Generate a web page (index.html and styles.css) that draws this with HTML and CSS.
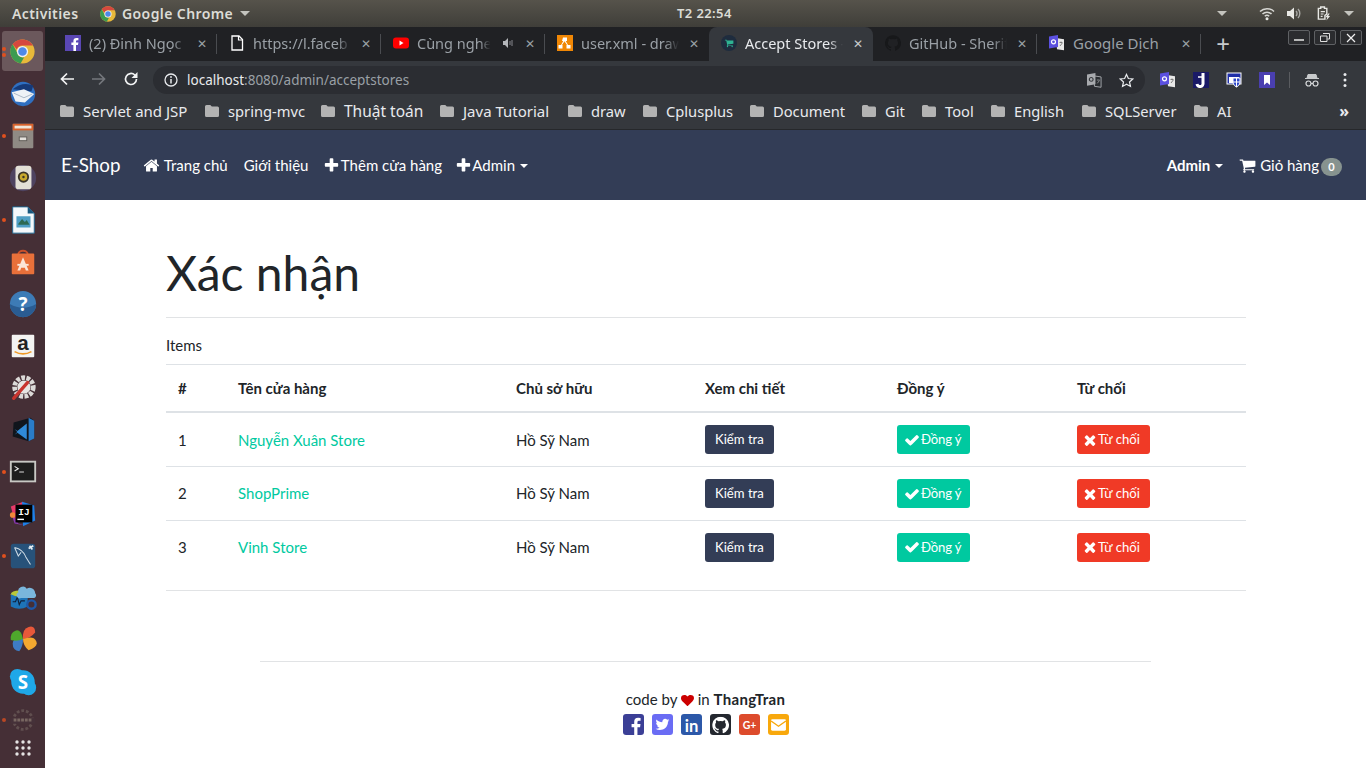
FILE: index.html
```html
<!DOCTYPE html>
<html lang="vi">
<head>
<meta charset="utf-8">
<title>Accept Stores</title>
<link rel="stylesheet" href="styles.css">
</head>
<body>
<svg class="sprite" xmlns="http://www.w3.org/2000/svg">
  <symbol id="i-check" viewBox="0 0 1792 1792"><path d="M1671 566q0 40-28 68l-724 724-136 136q-28 28-68 28t-68-28l-136-136-362-362q-28-28-28-68t28-68l136-136q28-28 68-28t68 28l294 295 656-657q28-28 68-28t68 28l136 136q28 28 28 68z"/></symbol>
  <symbol id="i-times" viewBox="0 0 1792 1792"><path d="M1490 1322q0 40-28 68l-136 136q-28 28-68 28t-68-28l-294-294-294 294q-28 28-68 28t-68-28l-136-136q-28-28-28-68t28-68l294-294-294-294q-28-28-28-68t28-68l136-136q28-28 68-28t68 28l294 294 294-294q28-28 68-28t68 28l136 136q28 28 28 68t-28 68l-294 294 294 294q28 28 28 68z"/></symbol>
  <symbol id="i-plus" viewBox="0 0 1792 1792"><path d="M1600 736v192q0 40-28 68t-68 28h-416v416q0 40-28 68t-68 28h-192q-40 0-68-28t-28-68v-416h-416q-40 0-68-28t-28-68v-192q0-40 28-68t68-28h416v-416q0-40 28-68t68-28h192q40 0 68 28t28 68v416h416q40 0 68 28t28 68z"/></symbol>
  <symbol id="i-home" viewBox="0 0 1792 1792"><path d="M1472 992v480q0 26-19 45t-45 19h-384v-384h-256v384h-384q-26 0-45-19t-19-45v-480q0-1 .5-3t.5-3l575-474 575 474q1 2 1 6zm223-69l-62 74q-8 9-21 11h-3q-13 0-21-7l-692-577-692 577q-12 8-24 7-13-2-21-11l-62-74q-8-10-7-23.500t11-21.500l719-599q32-26 76-26t76 26l244 204v-195q0-14 9-23t23-9h192q14 0 23 9t9 23v408l219 182q10 8 11 21.500t-7 23.500z"/></symbol>
  <symbol id="i-cart" viewBox="0 0 1792 1792"><path d="M704 1536q0 52-38 90t-90 38-90-38-38-90 38-90 90-38 90 38 38 90zm896 0q0 52-38 90t-90 38-90-38-38-90 38-90 90-38 90 38 38 90zm128-1088v512q0 24-16.500 42.500t-40.500 21.500l-1044 122q13 60 13 70 0 16-24 64h920q26 0 45 19t19 45-19 45-45 19h-1024q-26 0-45-19t-19-45q0-11 8-31.500t16-36 21.500-40 15.500-29.500l-177-823h-204q-26 0-45-19t-19-45 19-45 45-19h256q16 0 28.500 6.500t19.500 15.500 13 24.500 8 26 5.500 29.500 4.500 26h1201q26 0 45 19t19 45z"/></symbol>
  <symbol id="i-heart" viewBox="0 0 1792 1792"><path d="M896 1664q-26 0-44-18l-624-602q-10-8-27.500-26t-55.500-65.500-68-97.500-53.500-121-23.500-138q0-220 127-344t351-124q62 0 126.500 21.500t120 58 95.500 68.500 76 68q36-36 76-68t95.500-68.500 120-58 126.500-21.500q224 0 351 124t127 344q0 221-229 450l-623 600q-18 18-44 18z"/></symbol>
  <symbol id="i-folder" viewBox="0 0 14 12"><path d="M1.500 0h3.800l1.500 1.600h5.700a1.500 1.500 0 0 1 1.500 1.500v7.400a1.500 1.500 0 0 1-1.500 1.500h-11a1.500 1.500 0 0 1-1.500-1.500v-9a1.500 1.500 0 0 1 1.500-1.500z"/></symbol>
  <symbol id="i-translate" viewBox="0 0 16 16">
    <path d="M7 3l8 1.200v11l-7-1z" fill="#e8e8e8"/>
    <path d="M0 1.500l9-1.500v12l-9 1.500z" fill="#5b50e0"/>
    <circle cx="4.500" cy="6.800" r="2" fill="none" stroke="#fff" stroke-width="1.200"/>
    <path d="M10.500 7.500h3M12 6.500v1M11 11l2.300-3" stroke="#666" stroke-width=".8" fill="none"/>
  </symbol>
  <symbol id="i-github" viewBox="0 0 24 24"><path d="M12 .3a12 12 0 0 0-3.800 23.400c.6.100.8-.3.8-.6v-2c-3.300.7-4-1.600-4-1.600-.6-1.400-1.400-1.800-1.400-1.800-1-.7.100-.7.100-.7 1.200 0 1.900 1.200 1.900 1.200 1 1.800 2.800 1.300 3.500 1 0-.8.4-1.300.7-1.600-2.700-.3-5.500-1.300-5.500-6 0-1.200.5-2.300 1.300-3.100-.2-.4-.6-1.600 0-3.200 0 0 1-.3 3.400 1.200a11.500 11.500 0 0 1 6 0c2.300-1.500 3.300-1.200 3.300-1.200.6 1.600.2 2.800 0 3.200.9.8 1.300 1.900 1.300 3.200 0 4.600-2.800 5.600-5.500 5.900.5.4.9 1 .9 2.200v3.300c0 .3.100.7.8.6A12 12 0 0 0 12 .3"/></symbol>
  <symbol id="i-chrome" viewBox="0 0 32 32">
    <circle cx="16" cy="16" r="15.500" fill="#e8b93a"/>
    <path d="M16 .5a15.500 15.500 0 0 1 13.400 7.800H16a7.700 7.700 0 0 0-7.300 5.200L3.400 6.700A15.500 15.500 0 0 1 16 .5z" fill="#d6483e"/>
    <path d="M3.400 6.700l6.500 11.700a7.700 7.700 0 0 0 8 5.200l-4.300 7.700A15.500 15.500 0 0 1 3.400 6.700z" fill="#3c9b50"/>
    <circle cx="16" cy="16" r="7.200" fill="#f2f2f2"/>
    <circle cx="16" cy="16" r="5.500" fill="#4f89e8"/>
  </symbol>
</svg>

<header class="topbar">
  <span class="activities">Activities</span>
  <span class="app-menu"><svg class="app-logo"><use href="#i-chrome"/></svg>Google Chrome<i class="tri"></i></span>
  <span class="clock">T2 22:54</span>
  <span class="tray">
    <i class="tri tray-tri"></i>
    <svg class="tray-ico" viewBox="0 0 16 14"><path d="M1 5a10 10 0 0 1 14 0M3.500 7.500a6.500 6.500 0 0 1 9 0" fill="none" stroke="#d8d8d4" stroke-width="1.500"/><path d="M5.800 9.800a3.200 3.200 0 0 1 4.400 0" fill="none" stroke="#d8d8d4" stroke-width="1.500"/><circle cx="8" cy="12.300" r="1.500" fill="#e8e8e4"/></svg>
    <svg class="tray-ico vol" viewBox="0 0 16 14"><path d="M1 4.500h3l4-3.500v12l-4-3.500h-3z" fill="#e8e8e4"/><path d="M10 4.500a3.500 3.500 0 0 1 0 5M12 2.500a6.500 6.500 0 0 1 0 9" fill="none" stroke="#a8a8a4" stroke-width="1.400"/></svg>
    <svg class="tray-ico clip" viewBox="0 0 16 16"><path d="M2 2.500h2.500v-1.500h4v1.500h2.500v6l-2 1.500v4h-7z" fill="none" stroke="#e8e8e4" stroke-width="1.500"/><path d="M4.500 6h4.500M4.500 8.500h3M4.500 11h2" stroke="#e8e8e4" stroke-width="1.200"/><path d="M12.500 8l-3 4h2l-1 3.500 4-4.800h-2l1.500-2.700z" fill="#e8e8e4"/></svg>
    <i class="tri"></i>
  </span>
</header>

<div class="desktop">
  <nav class="dock">
    <div class="dock-item active"><b class="pip"></b><b class="pip second"></b><svg class="d32"><use href="#i-chrome"/></svg></div>
    <div class="dock-item">
      <svg class="d32" viewBox="0 0 32 32"><circle cx="16" cy="16" r="13" fill="#2f6fc0"/><path d="M5 11q11-9 22-4l-2 6z" fill="#163a78"/><path d="M4 14l13-3 11 5-10 9-10-1z" fill="#eef2f6"/><path d="M6 15l11 5 9-4" fill="none" stroke="#a9b6c4"/></svg>
    </div>
    <div class="dock-item"><b class="pip"></b>
      <svg class="d32" viewBox="0 0 32 32"><rect x="5" y="3" width="22" height="26" rx="1" fill="#8f8a84"/><rect x="5" y="3" width="22" height="7" fill="#d8622c"/><rect x="7" y="5" width="18" height="3" fill="#f0e6da"/><rect x="12" y="17" width="8" height="4" fill="#e4e1dc" stroke="#5f5b57"/></svg>
    </div>
    <div class="dock-item">
      <svg class="d32" viewBox="0 0 32 32"><circle cx="16" cy="16" r="14" fill="#4e4360"/><rect x="8" y="3" width="17" height="25" rx="3" fill="#e3e0d6"/><circle cx="16.500" cy="15" r="6" fill="#3a3428"/><circle cx="16.500" cy="15" r="4" fill="#c8a92c"/><circle cx="16.500" cy="15" r="1.300" fill="#3a3428"/></svg>
    </div>
    <div class="dock-item"><b class="pip"></b>
      <svg class="d32" viewBox="0 0 32 32"><path d="M5 2h16l7 7v21h-23z" fill="#f4f8fb" stroke="#1e6a94"/><path d="M21 2l7 7h-7z" fill="#17577e"/><rect x="9" y="12" width="15" height="12" fill="#4f9ec4"/><path d="M11 20l4-5 3 3 2-2 3 5h-12z" fill="#2e6a52"/></svg>
    </div>
    <div class="dock-item">
      <svg class="d32" viewBox="0 0 32 32"><path d="M11 8a5 4 0 0 1 10 0" fill="none" stroke="#c9502a" stroke-width="2"/><rect x="4" y="7" width="24" height="22" rx="1" fill="#e8703a"/><path d="M16 11l6 14h-3l-1-3h-4l-1 3h-3z" fill="#fbe5d8"/><rect x="10" y="18" width="12" height="2" fill="#fbe5d8"/></svg>
    </div>
    <div class="dock-item">
      <svg class="d32" viewBox="0 0 32 32"><circle cx="16" cy="16" r="14" fill="#3d7bb6"/><path d="M2 16a14 14 0 0 0 28 0q-14 8-28 0z" fill="#2a5c92"/><text x="16" y="23" class="dock-q">?</text></svg>
    </div>
    <div class="dock-item">
      <svg class="d32" viewBox="0 0 32 32"><rect x="4" y="4" width="24" height="24" rx="1" fill="#f4f4f2"/><text x="16" y="20" class="dock-a">a</text><path d="M7 22q9 5 18 0" fill="none" stroke="#f09a28" stroke-width="1.800"/></svg>
    </div>
    <div class="dock-item">
      <svg class="d32" viewBox="0 0 32 32"><circle cx="17" cy="15" r="10" fill="none" stroke="#dcdad8" stroke-width="5" stroke-dasharray="4 1.500"/><circle cx="17" cy="15" r="7" fill="#e6e4e2"/><path d="M6 27l15-17" stroke="#c8342e" stroke-width="3.500" stroke-linecap="round"/></svg>
    </div>
    <div class="dock-item">
      <svg class="d32" viewBox="0 0 32 32"><path d="M6 8l18-5 4 3v19l-6 3-17-5z" fill="#10151c"/><path d="M22 3l6 3v19l-6 3z" fill="#2a7cc8"/><path d="M20 9l-10 8-3-2 3 3-3 3 3-2 10 7z" fill="#2f8ad8"/></svg>
    </div>
    <div class="dock-item"><b class="pip"></b>
      <svg class="d32" viewBox="0 0 32 32"><rect x="3" y="5" width="26" height="21" fill="#1e1e1e" stroke="#c8c8c4" stroke-width="2"/><path d="M7 10l4 2.500-4 2.500" fill="none" stroke="#e8e8e8" stroke-width="1.200"/><path d="M12 16h5" stroke="#e8e8e8"/></svg>
    </div>
    <div class="dock-item">
      <svg class="d32" viewBox="0 0 32 32"><path d="M3 8l13-5 3 8-12 12z" fill="#e83a6a"/><path d="M15 3l13 4 1 16-13 6z" fill="#1e80e8"/><path d="M3 14l8 12 6 2-10-2z" fill="#8a3ab0"/><circle cx="5" cy="17" r="3" fill="#f0883a"/><rect x="8" y="6" width="18" height="19" fill="#000"/><text x="17" y="17" class="dock-ij">IJ</text><rect x="10" y="21" width="7" height="1.500" fill="#fff"/></svg>
    </div>
    <div class="dock-item"><b class="pip"></b>
      <svg class="d32" viewBox="0 0 32 32"><rect x="3" y="3" width="26" height="26" rx="3" fill="#27527a"/><path d="M7 7q9 2 12 10l5 8M7 7l4 9 3-4" fill="none" stroke="#cfdce6" stroke-width="1.100"/><path d="M22 8l5-3M23 5l3 4" stroke="#e6eef4" stroke-width="1.800"/></svg>
    </div>
    <div class="dock-item">
      <svg class="d32" viewBox="0 0 32 32"><ellipse cx="12" cy="12" rx="9" ry="4" fill="#b8c83a"/><path d="M3 12v13q9 5 18 0v-13q-9 5-18 0z" fill="#1e74b8"/><path d="M5 20l3 0 2-5 2 8 2-4h4" fill="none" stroke="#10203a" stroke-width="1.200"/><path d="M11 10a5 5 0 0 1 9-4 6 6 0 0 1 9 5 3 3 0 0 1-1 5h-14a3 3 0 0 1-3-6z" fill="#7ab6dc"/><circle cx="25" cy="23" r="4.500" fill="none" stroke="#1e58a8" stroke-width="2.500"/></svg>
    </div>
    <div class="dock-item">
      <svg class="d32" viewBox="0 0 32 32"><path d="M16 15q-11-2-11 5t7 8q4-5 4-13z" fill="#3e7cc4"/><path d="M16 15q-2-11-8-9t-5 10q7 2 13-1z" fill="#4ea82c"/><path d="M16 15q-1-11 6-13t7 6q-6 7-13 7z" fill="#e8583a"/><path d="M16 15q11-4 14 2t-8 10q-6-5-6-12z" fill="#f4a830"/></svg>
    </div>
    <div class="dock-item">
      <svg class="d32" viewBox="0 0 32 32"><circle cx="10" cy="10" r="8" fill="#1fa8e8"/><circle cx="22" cy="22" r="8" fill="#1fa8e8"/><circle cx="16" cy="16" r="12.500" fill="#1fa8e8"/><text x="16" y="23" class="dock-s">S</text></svg>
    </div>
    <div class="dock-item dim"><b class="pip"></b>
      <svg class="d32" viewBox="0 0 32 32"><circle cx="16" cy="16" r="10" fill="none" stroke="#6a5a58" stroke-width="3" stroke-dasharray="3 2"/><rect x="3" y="14" width="26" height="6" fill="#46323a"/><path d="M6 16h20" stroke="#8a7a70" stroke-width="3" stroke-dasharray="3 1"/></svg>
    </div>
    <div class="dock-item grid-ico">
      <svg class="d20" viewBox="0 0 18 18"><g fill="#e6e4e4"><circle cx="3" cy="3" r="1.700"/><circle cx="9" cy="3" r="1.700"/><circle cx="15" cy="3" r="1.700"/><circle cx="3" cy="9" r="1.700"/><circle cx="9" cy="9" r="1.700"/><circle cx="15" cy="9" r="1.700"/><circle cx="3" cy="15" r="1.700"/><circle cx="9" cy="15" r="1.700"/><circle cx="15" cy="15" r="1.700"/></g></svg>
    </div>
  </nav>

  <div class="browser">
    <div class="tabstrip">
      <div class="tab sep">
        <svg class="fav" viewBox="0 0 16 16"><rect width="16" height="16" fill="#5a47b4"/><path d="M11 16v-6h2l.4-2.400h-2.400v-1.400q0-1 1.100-1h1.300v-2.200h-2q-3 0-3 3v1.600h-2v2.400h2v6z" fill="#fff"/></svg>
        <span class="tab-title">(2) Đinh Ngọc</span><span class="tab-x">✕</span>
      </div>
      <div class="tab sep">
        <svg class="fav" viewBox="0 0 16 16"><path d="M3 1h7l3.500 3.500v10.500h-10.500z" fill="none" stroke="#fff" stroke-width="1.300"/><path d="M9.500 1v4h4" fill="none" stroke="#fff" stroke-width="1.200"/></svg>
        <span class="tab-title">https://l.faceb</span><span class="tab-x">✕</span>
      </div>
      <div class="tab sep">
        <svg class="fav" viewBox="0 0 16 16"><rect y="2.500" width="16" height="11" rx="3" fill="#f00"/><path d="M6.500 5.500l4 2.500-4 2.500z" fill="#fff"/></svg>
        <span class="tab-title short">Cùng nghe</span>
        <svg class="speaker" viewBox="0 0 12 12"><path d="M1 4h2l3-3v10l-3-3h-2z" fill="#b4b6ba"/><path d="M8 4v4M10 3v6" stroke="#85878c" stroke-width="1"/></svg>
        <span class="tab-x">✕</span>
      </div>
      <div class="tab">
        <svg class="fav" viewBox="0 0 16 16"><rect width="16" height="16" fill="#f08705"/><path d="M6 2.500h4v3.500h-1.300l2.300 4h2.500v3.500h-4v-3.500h.5l-2.500-3.800-2.500 3.800h.5v3.500h-4v-3.500h2.500l2.300-4h-1.300z" fill="#fff"/></svg>
        <span class="tab-title">user.xml - draw</span><span class="tab-x">✕</span>
      </div>
      <div class="tab current">
        <svg class="fav" viewBox="0 0 16 16"><circle cx="8" cy="8" r="8" fill="#1e2c3e"/><g transform="translate(3.500 3.500) scale(.0052)" fill="#2eb392"><use href="#i-cart" width="1792" height="1792"/></g></svg>
        <span class="tab-title">Accept Stores -</span><span class="tab-x">✕</span>
      </div>
      <div class="tab sep">
        <svg class="fav gh"><use href="#i-github"/></svg>
        <span class="tab-title">GitHub - Sherif</span><span class="tab-x">✕</span>
      </div>
      <div class="tab sep">
        <svg class="fav"><use href="#i-translate"/></svg>
        <span class="tab-title wide">Google Dịch</span><span class="tab-x">✕</span>
      </div>
      <span class="newtab">+</span>
      <div class="winctl">
        <span class="wbtn"><svg viewBox="0 0 10 10"><path d="M0 7h10" stroke="#e8e8e8" stroke-width="1.500"/></svg></span>
        <span class="wbtn"><svg viewBox="0 0 10 10"><path d="M3 .5h6.500v5.500h-2M.5 3h6.500v5.500h-6.500z" fill="none" stroke="#e0e0e0"/></svg></span>
        <span class="wbtn"><svg viewBox="0 0 10 10"><path d="M1 1l8 8M9 1l-8 8" stroke="#f0f0f0" stroke-width="1.200"/></svg></span>
      </div>
    </div>

    <div class="toolbar">
      <svg class="tb-ico" viewBox="0 0 16 16"><path d="M15 8h-12M8 2.500l-5.500 5.500 5.500 5.500" fill="none" stroke="#f2f3f4" stroke-width="1.700"/></svg>
      <svg class="tb-ico" viewBox="0 0 16 16"><path d="M1 8h12M8 2.500l5.500 5.500-5.500 5.500" fill="none" stroke="#74777c" stroke-width="1.700"/></svg>
      <svg class="tb-ico" viewBox="0 0 16 16"><path d="M13.500 8a5.500 5.500 0 1 1-1.700-4l1.700 1.700" fill="none" stroke="#f2f3f4" stroke-width="1.700"/><path d="M14.500 1v6h-6z" fill="#f2f3f4"/></svg>
      <div class="omnibox">
        <svg class="info" viewBox="0 0 14 14"><circle cx="7" cy="7" r="6" fill="none" stroke="#e8eaed" stroke-width="1.300"/><path d="M7 6v4.500" stroke="#e8eaed" stroke-width="1.500"/><circle cx="7" cy="4" r=".9" fill="#e8eaed"/></svg>
        <span class="url"><span class="host">localhost</span>:8080/admin/acceptstores</span>
        <svg class="omni-g" viewBox="0 0 16 16"><path d="M7 3l8 1.200v11l-7-1z" fill="#2a2d31" stroke="#a8aaae"/><path d="M0 1.500l9-1.500v12l-9 1.500z" fill="#a8aaae"/><circle cx="4.500" cy="6.800" r="2" fill="none" stroke="#35383c" stroke-width="1.200"/><path d="M10.500 7.500h3M11 11l2.300-3" stroke="#a8aaae" stroke-width=".8"/></svg>
        <svg class="omni-star" viewBox="0 0 16 16"><path d="M8 1.500l2 4.400 4.700.5-3.500 3.200 1 4.700-4.200-2.400-4.200 2.400 1-4.700-3.500-3.200 4.700-.5z" fill="none" stroke="#e8eaed" stroke-width="1.300"/></svg>
      </div>
      <div class="exts">
        <svg class="ext"><use href="#i-translate"/></svg>
        <svg class="ext" viewBox="0 0 16 16"><rect width="16" height="16" fill="#1a1a66"/><path d="M10 1v10a3 3 0 0 1-6 1" fill="none" stroke="#fff" stroke-width="3"/><path d="M5 5h5" stroke="#fff" stroke-width="1.500"/></svg>
        <svg class="ext" viewBox="0 0 16 16"><rect x="1" y="1" width="14" height="11" fill="#1f2fa8" stroke="#fff"/><rect x="3" y="5" width="10" height="6" fill="#fff"/><path d="M7 6h7v5q-1 3-3.500 4q-2.500-1-3.500-4z" fill="#2a44c8" stroke="#fff"/><path d="M10.500 6v9M7 10h7" stroke="#fff"/></svg>
        <svg class="ext" viewBox="0 0 16 16"><rect width="16" height="16" fill="#4a3fb0"/><path d="M5 3h6v10l-3-2.500-3 2.500z" fill="#fff"/></svg>
        <i class="tb-sep"></i>
        <svg class="ext incog" viewBox="0 0 16 16"><path d="M4 2.500h8l1 3.500h-10zM1 6.500h14" fill="#c8cacc" stroke="#c8cacc"/><circle cx="4.500" cy="11.500" r="2.500" fill="none" stroke="#d8dadc" stroke-width="1.200"/><circle cx="11.500" cy="11.500" r="2.500" fill="none" stroke="#d8dadc" stroke-width="1.200"/><path d="M7 11.500h2" stroke="#d8dadc"/></svg>
        <svg class="ext" viewBox="0 0 16 16"><g fill="#e8eaed"><circle cx="8" cy="2.500" r="1.500"/><circle cx="8" cy="8" r="1.500"/><circle cx="8" cy="13.500" r="1.500"/></g></svg>
      </div>
    </div>

    <div class="bookmarks">
      <span class="bm roomy"><svg class="folder"><use href="#i-folder"/></svg>Servlet and JSP</span>
      <span class="bm"><svg class="folder"><use href="#i-folder"/></svg>spring-mvc</span>
      <span class="bm big"><svg class="folder"><use href="#i-folder"/></svg>Thuật toán</span>
      <span class="bm roomy"><svg class="folder"><use href="#i-folder"/></svg>Java Tutorial</span>
      <span class="bm"><svg class="folder"><use href="#i-folder"/></svg>draw</span>
      <span class="bm"><svg class="folder"><use href="#i-folder"/></svg>Cplusplus</span>
      <span class="bm"><svg class="folder"><use href="#i-folder"/></svg>Document</span>
      <span class="bm"><svg class="folder"><use href="#i-folder"/></svg>Git</span>
      <span class="bm"><svg class="folder"><use href="#i-folder"/></svg>Tool</span>
      <span class="bm"><svg class="folder"><use href="#i-folder"/></svg>English</span>
      <span class="bm"><svg class="folder"><use href="#i-folder"/></svg>SQLServer</span>
      <span class="bm"><svg class="folder"><use href="#i-folder"/></svg>AI</span>
      <span class="bm-more">»</span>
    </div>

    <div class="viewport">
      <div class="navbar">
        <a class="brand">E-Shop</a>
        <a class="nav-link"><svg class="fa"><use href="#i-home"/></svg> Trang chủ</a>
        <a class="nav-link">Giới thiệu</a>
        <a class="nav-link add-store"><svg class="fa tight"><use href="#i-plus"/></svg> Thêm cửa hàng</a>
        <a class="nav-link caret"><svg class="fa tight"><use href="#i-plus"/></svg> Admin</a>
        <span class="nav-spacer"></span>
        <a class="nav-link caret strong">Admin</a>
        <a class="nav-link cart"><svg class="fa"><use href="#i-cart"/></svg> Giỏ hàng<span class="badge">0</span></a>
      </div>

      <main class="content">
        <h1>Xác nhận</h1>
        <hr class="rule">
        <p class="items">Items</p>
        <table class="stores">
          <colgroup><col class="c1"><col class="c2"><col class="c3"><col class="c4"><col class="c5"><col class="c6"></colgroup>
          <thead>
            <tr><th>#</th><th>Tên cửa hàng</th><th>Chủ sở hữu</th><th>Xem chi tiết</th><th>Đồng ý</th><th>Từ chối</th></tr>
          </thead>
          <tbody>
            <tr>
              <td>1</td><td><a class="store">Nguyễn Xuân Store</a></td><td>Hồ Sỹ Nam</td>
              <td><a class="btn dark">Kiểm tra</a></td>
              <td><a class="btn ok"><svg class="fa"><use href="#i-check"/></svg>Đồng ý</a></td>
              <td><a class="btn no"><svg class="fa"><use href="#i-times"/></svg>Từ chối</a></td>
            </tr>
            <tr>
              <td>2</td><td><a class="store">ShopPrime</a></td><td>Hồ Sỹ Nam</td>
              <td><a class="btn dark">Kiểm tra</a></td>
              <td><a class="btn ok"><svg class="fa"><use href="#i-check"/></svg>Đồng ý</a></td>
              <td><a class="btn no"><svg class="fa"><use href="#i-times"/></svg>Từ chối</a></td>
            </tr>
            <tr>
              <td>3</td><td><a class="store">Vinh Store</a></td><td>Hồ Sỹ Nam</td>
              <td><a class="btn dark">Kiểm tra</a></td>
              <td><a class="btn ok"><svg class="fa"><use href="#i-check"/></svg>Đồng ý</a></td>
              <td><a class="btn no"><svg class="fa"><use href="#i-times"/></svg>Từ chối</a></td>
            </tr>
          </tbody>
        </table>
        <hr class="rule end">
      </main>

      <footer class="foot">
        <hr class="foot-rule">
        <p class="credit">code by <svg class="fa heart"><use href="#i-heart"/></svg> in <strong>ThangTran</strong></p>
        <div class="social">
          <svg class="soc" viewBox="0 0 24 24"><rect width="24" height="24" rx="3.500" fill="#3b3f96"/><path d="M16.500 24v-9h3l.5-3.500h-3.500v-2.200q0-1.600 1.700-1.600h1.900v-3.200q-1.300-.2-2.800-.2-4.500 0-4.500 4.600v2.600h-3v3.500h3v9z" fill="#fff"/></svg>
          <svg class="soc" viewBox="0 0 24 24"><rect width="24" height="24" rx="3.500" fill="#6a6cf4"/><g transform="translate(3 3) scale(.01)" fill="#fff"><path d="M1684 408q-67 98-162 167 1 14 1 42 0 130-38 259.500t-115.500 248.500-184.500 210.500-258 146-323 54.500q-271 0-496-145 35 4 78 4 225 0 401-138-105-2-188-64.500t-114-159.500q33 5 61 5 43 0 85-11-112-23-185.500-111.500t-73.500-205.500v-4q68 38 146 41-66-44-105-115t-39-154q0-88 44-163 121 149 294.500 238.500t371.500 99.500q-8-38-8-74 0-134 94.500-228.500t228.500-94.500q140 0 236 102 109-21 205-78-37 115-142 178 92-10 184-50z"/></g></svg>
          <svg class="soc" viewBox="0 0 24 24"><rect width="24" height="24" rx="3.500" fill="#2c58a8"/><text x="12" y="20" class="soc-in">in</text></svg>
          <svg class="soc" viewBox="0 0 24 24"><rect width="24" height="24" rx="3.500" fill="#24282f"/><g transform="translate(2.500 3) scale(.8)" fill="#fff"><use href="#i-github" width="24" height="24"/></g></svg>
          <svg class="soc" viewBox="0 0 24 24"><rect width="24" height="24" rx="3.500" fill="#dd4b2c"/><text x="12" y="17" class="soc-g">G+</text></svg>
          <svg class="soc" viewBox="0 0 24 24"><rect width="24" height="24" rx="3.500" fill="#f8a80c"/><rect x="3.500" y="6" width="17" height="13" rx="1.500" fill="#fff"/><path d="M3.500 8l8.500 6 8.500-6" fill="none" stroke="#f8a80c" stroke-width="1.600"/></svg>
        </div>
      </footer>
    </div>
  </div>
</div>
</body>
</html>
```
FILE: styles.css
```css
* { box-sizing: border-box; }
html, body { margin: 0; height: 100%; overflow: hidden; }
body { width: 1366px; height: 768px; font-family: Lato, "Noto Sans", sans-serif; color: #212529; display: flex; flex-direction: column; background: #fff; }
.sprite { width: 0; height: 0; position: absolute; }
a { text-decoration: none; }

/* GNOME top bar */
.topbar { height: 27px; flex: none; display: flex; align-items: center; position: relative; padding-left: 12px; background: linear-gradient(#56534b, #3f3e39); color: #dcdcd6; font: 600 14px "Noto Sans", sans-serif; letter-spacing: .4px; }
.activities { width: 88px; }
.app-menu { display: flex; align-items: center; gap: 6px; }
.app-logo { width: 16px; height: 16px; }
.tri { display: inline-block; width: 0; height: 0; border-left: 5px solid transparent; border-right: 5px solid transparent; border-top: 5px solid #c4c4be; }
.app-menu .tri { margin-left: 1px; }
.clock { position: absolute; left: 677px; top: 4px; font-size: 13px; }
.tray { margin-left: auto; display: flex; align-items: center; gap: 11px; padding-right: 12px; }
.tray-tri { margin-right: 21px; }
.tray-ico { width: 16px; height: 15px; }
.vol { margin-right: 3px; }
.clip { margin-right: 1px; }

.desktop { flex: 1; display: flex; min-height: 0; }

/* Launcher */
.dock { width: 45px; flex: none; padding: 4px 2px 0; display: flex; flex-direction: column; background: #452f36; }
.dock-item { height: 42px; flex: none; display: flex; align-items: center; justify-content: center; position: relative; border-radius: 3px; }
.dock-item.active { height: 40px; margin-bottom: 2px; background: #6b585c; }
.dock-item.dim { opacity: .75; height: 34px; }
.dock-item.grid-ico { height: 22px; }
.d32 { width: 30px; height: 30px; }
.active .d32 { width: 25px; height: 25px; }
.d20 { width: 18px; height: 18px; }
.pip { position: absolute; left: 0; top: 50%; width: 4px; height: 4px; margin-top: -2px; border-radius: 50%; background: #e0501e; }
.pip.second { margin-top: 3px; }
.active .pip { margin-top: -4px; }
.active .pip.second { margin-top: 2px; }
.dock-q { font: 700 20px "Noto Sans", sans-serif; fill: #fff; text-anchor: middle; }
.dock-a { font: 700 22px "Liberation Sans", sans-serif; fill: #222; text-anchor: middle; }
.dock-ij { font: 700 10px "Liberation Mono", monospace; fill: #fff; text-anchor: middle; }
.dock-s { font: 700 20px "Noto Sans", sans-serif; fill: #fff; text-anchor: middle; }

/* Chrome */
.browser { flex: 1; min-width: 0; display: flex; flex-direction: column; }
.tabstrip { height: 34px; flex: none; display: flex; padding-left: 8px; background: #202124; color: #9aa0a6; font: 14.500px "Noto Sans", sans-serif; position: relative; }
.tab { width: 164px; display: flex; align-items: center; padding: 0 8px 2px 12px; position: relative; }
.tab.sep::after { content: ""; position: absolute; right: 0; top: 7px; height: 20px; width: 1px; background: #4a4c50; }
.tab.current { background: #35383d; border-radius: 8px 8px 0 0; color: #e8eaed; }
.tab-title { flex: 1; min-width: 0; margin-left: 8px; white-space: nowrap; overflow: hidden; -webkit-mask-image: linear-gradient(to right, #000 84%, transparent 98%); mask-image: linear-gradient(to right, #000 84%, transparent 98%); }
.tab-title.short { flex: none; width: 75px; }
.tab-title.wide { font-size: 15px; -webkit-mask-image: none; mask-image: none; }
.tab-x { width: 14px; font-size: 12px; text-align: center; color: #9aa0a6; margin-left: 6px; }
.current .tab-x { color: #c8cacc; }
.fav { width: 16px; height: 16px; flex: none; }
.fav.gh { fill: #17181a; }
.speaker { width: 12px; height: 12px; margin-left: 10px; flex: none; }
.speaker + .tab-x { margin-left: 9px; }
.newtab { width: 44px; text-align: center; font-size: 24px; line-height: 33px; color: #c8cacc; }
.winctl { position: absolute; right: 4px; top: 3px; display: flex; gap: 4px; }
.wbtn { width: 22px; height: 15px; display: flex; align-items: center; justify-content: center; border: 1px solid #5f6164; border-radius: 2px; background: #2b2c2f; }
.wbtn svg { width: 10px; height: 10px; }

.toolbar { height: 33px; flex: none; display: flex; align-items: flex-end; padding-left: 14px; background: #35383d; }
.tb-ico { width: 16px; height: 16px; margin: 0 16px 7px 0; flex: none; }
.tb-ico:nth-child(3) { margin-right: 14px; }
.omnibox { width: 992px; height: 28px; flex: none; display: flex; align-items: center; padding: 0 11px; border-radius: 14px; background: #2b2d32; color: #9aa0a6; font: 13.500px "Noto Sans", sans-serif; }
.info { width: 14px; height: 14px; flex: none; margin-right: 9px; }
.host { color: #e8eaed; }
.url { flex: 1; }
.omni-g { width: 15px; height: 15px; margin-right: 17px; }
.omni-star { width: 15px; height: 15px; }
.exts { display: flex; align-items: center; gap: 17px; margin: 0 0 6px 15px; }
.ext { width: 16px; height: 16px; flex: none; }
.tb-sep { width: 1px; height: 16px; background: #5a5c60; margin-left: -3px; }
.incog { margin-left: -3px; }

.bookmarks { height: 36px; flex: none; display: grid; grid-template-columns: 145px 116px 119px 128px 75px 107px 112px 60px 69px 91px 112px 1fr 40px; align-items: center; padding: 0 0 1px 15px; background: #35383d; border-bottom: 1px solid #26282b; color: #e8eaed; font: 14.700px "Noto Sans", sans-serif; }
.bm { display: flex; align-items: center; gap: 9px; white-space: nowrap; }
.bm.big { font-size: 15.500px; }
.bm.roomy { font-size: 15px; }
.folder { width: 14px; height: 12px; fill: #b3b3b3; flex: none; }
.bm-more { font-size: 16px; font-weight: 700; justify-self: end; padding-right: 17px; }

/* Page */
.viewport { flex: 1; min-height: 0; background: #fff; font-size: 15px; line-height: 1.5; }
.fa { width: 1em; height: 1em; fill: currentColor; vertical-align: -2px; }
.navbar { height: 70px; display: flex; align-items: center; padding: 0 16px; background: #333d56; color: #fff; }
.brand { font-size: 18.750px; margin-right: 15px; color: #fff; }
.nav-link { padding: 0 8px; color: #fff; white-space: nowrap; }
.nav-link.strong { font-weight: 700; }
.nav-link.add-store { padding-right: 6px; }
.nav-spacer { flex: 1; }
.caret::after { content: ""; display: inline-block; margin-left: 5px; vertical-align: 3px; border-top: 4px solid #fff; border-left: 4px solid transparent; border-right: 4px solid transparent; }
.nav-link .fa { width: 17px; height: 17px; vertical-align: -3px; }
.nav-link .fa.tight { margin: 0 -3px 0 -1px; }
.badge { display: inline-block; min-width: 21px; margin-left: 2px; padding: 2px 7px; font-size: 11px; font-weight: 700; line-height: 14px; text-align: center; border-radius: 10px; background: #87938f; vertical-align: 0; }
.cart { padding-left: 8px; }

.content { width: 1080px; margin-left: 121px; padding-top: 44px; }
h1 { margin: 0; font-size: 48px; font-weight: 400; line-height: 1.2; height: 73px; }
.rule { margin: 0; border: 0; border-top: 1px solid #e1e3e5; }
.items { margin: 0; height: 46px; line-height: 55px; }
.stores { width: 100%; border-collapse: collapse; table-layout: fixed; border-top: 1px solid #dee2e6; }
.c1 { width: 60px; } .c2 { width: 278px; } .c3 { width: 189px; } .c4 { width: 192px; } .c5 { width: 180px; } .c6 { width: 181px; }
th { height: 47px; padding: 0 12px; text-align: left; font-weight: 700; border-bottom: 2px solid #dee2e6; }
td { height: 54px; padding: 0 12px; border-bottom: 1px solid #dee2e6; }
tbody tr:first-child td { height: 55px; padding-top: 1px; }
tbody tr:last-child td { border-bottom: 0; padding-bottom: 1px; }
.store { color: #00c9a0; }
.btn { display: inline-flex; align-items: center; gap: 1px; height: 29px; padding: 0 10px; font-size: 13.125px; line-height: 1; border-radius: 3px; color: #fff; white-space: nowrap; vertical-align: middle; }
.btn .fa { width: 16px; height: 16px; flex: none; }
.ok { padding-right: 9px; letter-spacing: -.15px; }
.ok .fa { margin-left: -3px; }
.no { gap: 0; }
.no .fa { margin-left: -5px; }
.dark { background: #333d56; }
.ok { background: #00c9a0; }
.no { background: #f03a26; }
.end { margin-top: 15px; }

.foot { width: 891px; margin: 70px 0 0 215px; text-align: center; }
.foot-rule { margin: 0; border: 0; border-top: 1px solid #e1e3e5; }
.credit { margin: 26px 0 0; line-height: 22px; font-size: 15px; }
.heart { color: #c00; width: 13px; height: 13px; }
.credit strong { font-weight: 700; letter-spacing: .3px; }
.social { display: flex; justify-content: center; gap: 8px; margin-top: 4px; }
.soc { width: 21px; height: 21px; }
.soc-in { font: 700 19px Lato, sans-serif; fill: #fff; text-anchor: middle; }
.soc-g { font: 700 12px Lato, sans-serif; fill: #fff; text-anchor: middle; }
```
